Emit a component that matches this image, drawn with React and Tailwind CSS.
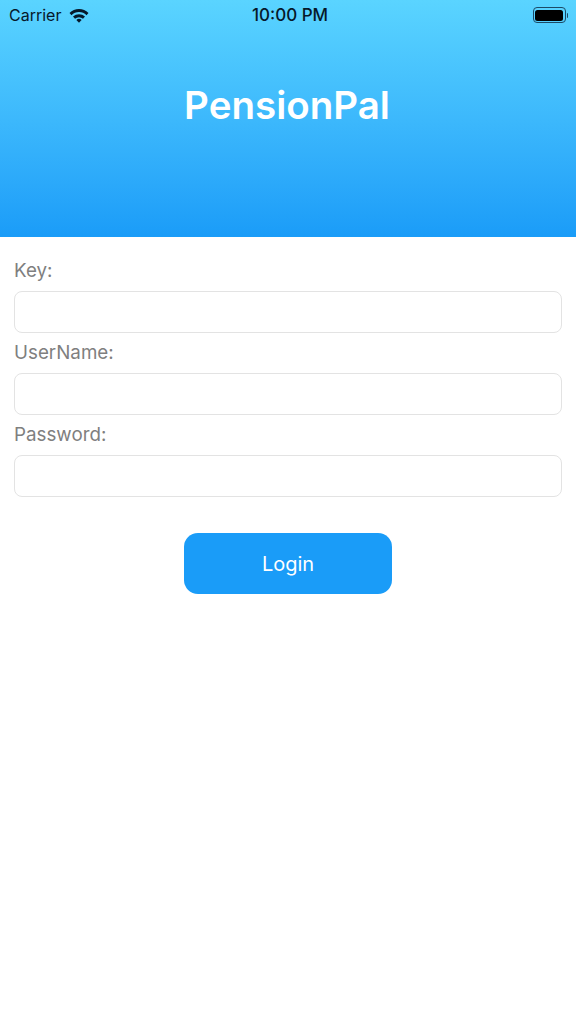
const WifiIcon = () => (
	<svg width="20" height="15" viewBox="0 0 20 15" className="ml-2">
		<path d="M0.5 5 A13.5 13.5 0 0 1 19.5 5 L17.5 7.2 A10.6 10.6 0 0 0 2.5 7.2 Z" fill="#06182a" />
		<path d="M4 8.6 A8.6 8.6 0 0 1 16 8.6 L14 10.8 A5.8 5.8 0 0 0 6 10.8 Z" fill="#06182a" />
		<path d="M7.4 12 A3.7 3.7 0 0 1 12.6 12 L10 14.8 Z" fill="#06182a" />
	</svg>
);

const Battery = () => (
	<div className="flex items-center">
		<div className="w-[33px] h-[16px] rounded-[4px] border border-[#1c4a66] p-[1.5px]">
			<div className="w-full h-full rounded-[2.5px] bg-black"></div>
		</div>
		<div className="w-[1.5px] h-[5px] ml-[1px] rounded-r-sm bg-[#1c4a66]"></div>
	</div>
);

const Field = ({ label }) => (
	<div>
		<div className="h-[40px] pt-[8px] text-[18.8px] leading-[24px] text-[#7f7f7f]">{label}</div>
		<div className="h-[42px] rounded-[8px] border border-[#e3e3e3] bg-white"></div>
	</div>
);

export default function App() {
	return (
		<div className="w-[576px] h-[1024px] bg-white font-['Inter','Liberation_Sans',sans-serif]">
			<div className="h-[237px] bg-gradient-to-b from-[#5ad4ff] to-[#1a9cf8]">
				<div className="relative flex items-center justify-between h-[30px] pl-[9px] pr-[8px] text-[#06182a]">
					<div className="flex items-center text-[16px]">
						<span>Carrier</span>
						<WifiIcon />
					</div>
					<span className="absolute left-[252px] top-[4px] text-[17px] leading-[22px] font-medium">10:00 PM</span>
					<Battery />
				</div>
				<h1 className="mt-[46px] pr-[2px] text-center text-[38.5px] leading-[58px] font-semibold text-white">PensionPal</h1>
			</div>
			<div className="px-[14px] pt-[14px]">
				<Field label="Key:" />
				<Field label="UserName:" />
				<Field label="Password:" />
				<button className="block mx-auto mt-[36px] w-[208px] h-[61px] rounded-[14px] bg-[#1a9cf8] text-white text-[20px]">
					Login
				</button>
			</div>
		</div>
	);
}
